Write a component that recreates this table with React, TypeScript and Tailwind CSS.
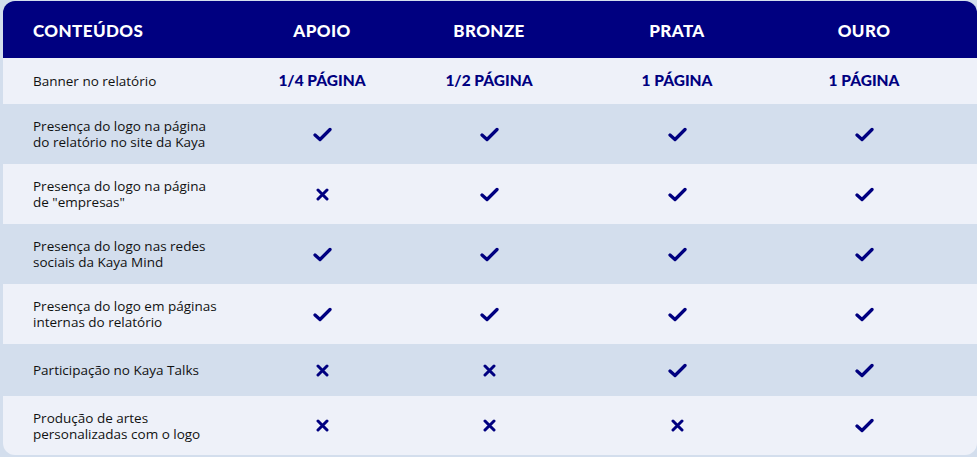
import React from 'react';

type Cell = boolean | string;

const rows: { label: string[]; cells: Cell[]; h: string }[] = [
  { label: ['Banner no relatório'], cells: ['1/4 PÁGINA', '1/2 PÁGINA', '1 PÁGINA', '1 PÁGINA'], h: 'h-[46px]' },
  { label: ['Presença do logo na página', 'do relatório no site da Kaya'], cells: [true, true, true, true], h: 'h-[60px]' },
  { label: ['Presença do logo na página', 'de "empresas"'], cells: [false, true, true, true], h: 'h-[60px]' },
  { label: ['Presença do logo nas redes', 'sociais da Kaya Mind'], cells: [true, true, true, true], h: 'h-[60px]' },
  { label: ['Presença do logo em páginas', 'internas do relatório'], cells: [true, true, true, true], h: 'h-[60px]' },
  { label: ['Participação no Kaya Talks'], cells: [false, false, true, true], h: 'h-[52px]' },
  { label: ['Produção de artes', 'personalizadas com o logo'], cells: [false, false, false, true], h: 'h-[59px]' },
];

const Check = () => (
  <svg width="19" height="15" viewBox="0 0 19 15">
    <path d="M2 8 L7 12.5 L17 2.5" fill="none" stroke="#000080" strokeWidth="3.3" strokeLinecap="round" strokeLinejoin="round" />
  </svg>
);

const Cross = () => (
  <svg width="13" height="13" viewBox="0 0 13 13">
    <path d="M2 2 L11 11 M11 2 L2 11" fill="none" stroke="#000080" strokeWidth="3" strokeLinecap="round" />
  </svg>
);

const cols = 'grid grid-cols-[266px_106px_228px_148px_226px]';

export default function App() {
  return (
    <div className="w-[977px] h-[457px] bg-[#d3deed] pt-px pl-[3px] font-['Open_Sans',sans-serif] overflow-hidden">
      <div className="rounded-xl overflow-hidden w-[974px]">
        {/* Header */}
        <div className={`${cols} h-[57px] bg-[#000080] items-center text-white font-['Lato',sans-serif] font-black text-[17px] tracking-[0.4px]`}>
          <div className="pl-[30px] pt-[2px]">CONTEÚDOS</div>
          <div className="text-center pt-[2px]">APOIO</div>
          <div className="text-center pt-[2px]">BRONZE</div>
          <div className="text-center pt-[2px]">PRATA</div>
          <div className="text-center pt-[2px]">OURO</div>
        </div>

        {rows.map((r, i) => (
          <div key={i} className={`${cols} ${r.h} items-center ${i % 2 === 0 ? 'bg-[#eef1f9]' : 'bg-[#d3deed]'}`}>
            <div className="pl-[30px] text-[13.5px] leading-[16px] text-[#111]">
              {r.label.map((l, j) => (
                <div key={j}>{l}</div>
              ))}
            </div>
            {r.cells.map((c, j) => (
              <div key={j} className="flex justify-center">
                {typeof c === 'string' ? (
                  <span className="font-['Lato',sans-serif] font-black text-[15.5px] text-[#000080]">{c}</span>
                ) : c ? (
                  <Check />
                ) : (
                  <Cross />
                )}
              </div>
            ))}
          </div>
        ))}
      </div>
    </div>
  );
}
